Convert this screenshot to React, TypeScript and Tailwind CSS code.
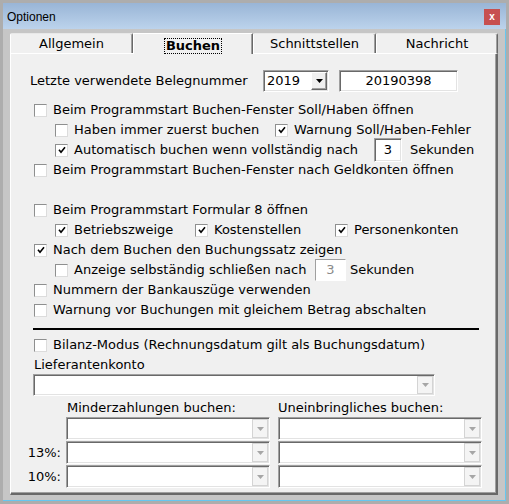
import React from 'react';

const sunken =
  'border border-t-[#a0a0a0] border-l-[#a0a0a0] border-r-white border-b-white shadow-[inset_1px_1px_0_#696969,inset_-1px_-1px_0_#e3e3e3] bg-white';

const Check = ({ checked }: { checked?: boolean }) => (
  <span className="inline-flex h-[13px] w-[13px] shrink-0 items-center justify-center border border-t-[#8e8f8f] border-l-[#8e8f8f] border-r-[#dcdcdc] border-b-[#dcdcdc] bg-white">
    {checked && (
      <svg width="8" height="8" viewBox="0 0 8 8">
        <path d="M1 3.8 L3 6.2 L7 1.2" fill="none" stroke="#000" strokeWidth="1.6" />
      </svg>
    )}
  </span>
);

const CheckItem = ({ checked, label, className = '' }: { checked?: boolean; label: string; className?: string }) => (
  <div className={`flex items-center ${className}`}>
    <Check checked={checked} />
    <span className="ml-[6px] whitespace-nowrap">{label}</span>
  </div>
);

const Arrow = ({ disabled }: { disabled?: boolean }) => (
  <svg width="7" height="4" viewBox="0 0 7 4">
    <polygon points="0,0 7,0 3.5,4" fill={disabled ? '#a6a6a6' : '#000'} />
  </svg>
);

const Combo = ({ className = '', value, disabled }: { className?: string; value?: string; disabled?: boolean }) => (
  <div className={`flex p-[1px] ${sunken} ${className}`}>
    <div className="flex flex-1 items-center pl-[2px]">{value}</div>
    {disabled ? (
      <div className="flex w-[16px] items-center justify-center border border-[#d4d4d4] bg-[#f4f4f4]">
        <Arrow disabled />
      </div>
    ) : (
      <div className="flex w-[16px] items-center justify-center border border-t-white border-l-white border-r-[#696969] border-b-[#696969] bg-[#f0f0f0] shadow-[inset_-1px_-1px_0_#a0a0a0]">
        <Arrow />
      </div>
    )}
  </div>
);

const tabs = [
  { label: 'Allgemein', w: 'w-[123px]' },
  { label: 'Buchen', w: 'w-[120px]', active: true },
  { label: 'Schnittstellen', w: 'w-[123px]' },
  { label: 'Nachricht', w: 'w-[122px]' },
];

export default function App() {
  return (
    <div className="flex h-[504px] w-[509px] flex-col bg-[#adadad] p-[3px] font-['DejaVu_Sans',sans-serif] text-[13px] text-black">
      {/* title bar */}
      <div className="flex h-[26px] shrink-0 items-center justify-between bg-linear-to-b from-[#99b5d6] to-[#bcd3ec] pl-[4px] pr-[6px]">
        <span className="pt-[2px] font-['Liberation_Sans',sans-serif] text-[12px]">Optionen</span>
        <div className="mt-[1px] flex h-[16px] w-[16px] items-center justify-center bg-[#c75050] font-['Liberation_Sans',sans-serif] text-[10px] font-bold leading-none text-white">
          x
        </div>
      </div>

      {/* body */}
      <div className="flex flex-1 flex-col border-r border-b border-[#66c6f0] bg-[#c6c6c6] pt-[4px] pl-[7px]">
        <div className="flex h-[20px] w-[488px]">
          {tabs.map((t) =>
            t.active ? (
              <div
                key={t.label}
                className={`${t.w} relative z-10 flex h-[21px] items-center justify-center border-t border-l border-white bg-[#f0f0f0] pt-[3px] shadow-[inset_-1px_0_0_#a0a0a0] border-r border-r-[#696969]`}
              >
                <span className="px-[1px] font-bold leading-[14px] outline outline-1 outline-dotted outline-black">
                  {t.label}
                </span>
              </div>
            ) : (
              <div
                key={t.label}
                className={`${t.w} flex items-center justify-center rounded-t-[2px] border-t border-l border-r border-t-[#e8e8e8] border-l-white border-r-[#696969] bg-[#f0f0f0] pt-[1px] shadow-[inset_-1px_0_0_#a0a0a0]`}
              >
                {t.label}
              </div>
            ),
          )}
        </div>

        {/* panel */}
        <div className="flex h-[442px] w-[488px] flex-col border-t border-l border-white border-r-2 border-b-2 border-r-[#696969] border-b-[#696969] bg-[#f0f0f0] shadow-[inset_-1px_-1px_0_#a0a0a0]">
          <div className="mt-[16px] flex h-[22px] items-center">
            <span className="ml-[19px] w-[233px] whitespace-nowrap">Letzte verwendete Belegnummer</span>
            <Combo className="h-[22px] w-[66px]" value="2019" />
            <div className={`ml-[10px] flex h-[22px] w-[119px] items-center justify-center ${sunken}`}>20190398</div>
          </div>

          <div className="mt-[8px] flex flex-col">
            <CheckItem className="ml-[23px] h-[20px]" label="Beim Programmstart Buchen-Fenster Soll/Haben öffnen" />
            <div className="ml-[44px] flex h-[20px] items-center">
              <CheckItem className="w-[220px]" label="Haben immer zuerst buchen" />
              <CheckItem checked label="Warnung Soll/Haben-Fehler" />
            </div>
            <div className="ml-[44px] flex h-[20px] items-center">
              <CheckItem className="w-[319px]" checked label="Automatisch buchen wenn vollständig nach" />
              <div className={`flex h-[24px] w-[28px] shrink-0 items-center justify-center ${sunken}`}>3</div>
              <span className="ml-[8px]">Sekunden</span>
            </div>
            <CheckItem className="ml-[23px] h-[20px]" label="Beim Programmstart Buchen-Fenster nach Geldkonten öffnen" />
            <div className="h-[20px]" />
            <CheckItem className="ml-[23px] h-[20px]" label="Beim Programmstart Formular 8 öffnen" />
            <div className="ml-[44px] flex h-[20px] items-center">
              <CheckItem className="w-[140px]" checked label="Betriebszweige" />
              <CheckItem className="w-[140px]" checked label="Kostenstellen" />
              <CheckItem checked label="Personenkonten" />
            </div>
            <CheckItem className="ml-[23px] h-[20px]" checked label="Nach dem Buchen den Buchungssatz zeigen" />
            <div className="ml-[44px] flex h-[20px] items-center">
              <CheckItem className="w-[260px]" label="Anzeige selbständig schließen nach" />
              <div className="flex h-[22px] w-[31px] shrink-0 items-center justify-center border border-t-[#a0a0a0] border-l-[#a0a0a0] border-r-white border-b-white bg-white text-[#8a8a8a]">
                3
              </div>
              <span className="ml-[4px]">Sekunden</span>
            </div>
            <CheckItem className="ml-[23px] h-[20px]" label="Nummern der Bankauszüge verwenden" />
            <CheckItem className="ml-[23px] h-[20px]" label="Warnung vor Buchungen mit gleichem Betrag abschalten" />
          </div>

          <div className="mt-[8px] ml-[22px] h-[2px] w-[446px] bg-black" />

          <CheckItem className="mt-[5px] ml-[23px] h-[20px]" label="Bilanz-Modus (Rechnungsdatum gilt als Buchungsdatum)" />
          <div className="ml-[23px] h-[19px] leading-[19px]">Lieferantenkonto</div>
          <Combo className="ml-[22px] h-[22px] w-[402px]" disabled />

          <div className="flex h-[21px] pt-[4px] leading-[16px]">
            <span className="ml-[56px] w-[211px]">Minderzahlungen buchen:</span>
            <span>Uneinbringliches buchen:</span>
          </div>
          {['', '13%:', '10%:'].map((l, i) => (
            <div key={i} className={`flex h-[23px] items-center ${i > 0 ? 'mt-[1px]' : ''}`}>
              <span className="w-[55px] pr-[5px] text-right">{l}</span>
              <Combo className="h-[23px] w-[204px]" disabled />
              <Combo className="ml-[8px] h-[23px] w-[204px]" disabled />
            </div>
          ))}
        </div>
      </div>
    </div>
  );
}
